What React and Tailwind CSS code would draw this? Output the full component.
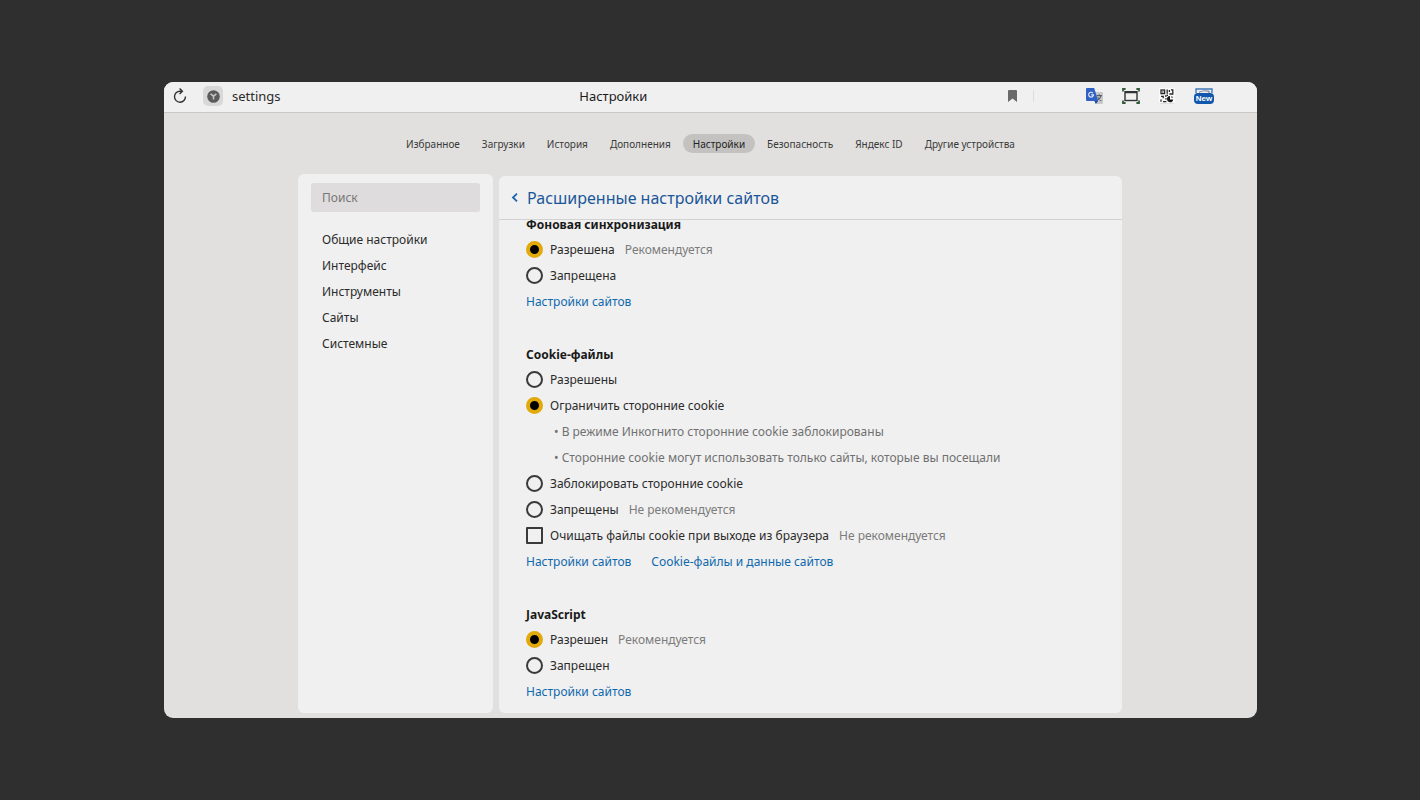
const tabs = [
  'Избранное',
  'Загрузки',
  'История',
  'Дополнения',
  'Настройки',
  'Безопасность',
  'Яндекс ID',
  'Другие устройства',
];

const menu = ['Общие настройки', 'Интерфейс', 'Инструменты', 'Сайты', 'Системные'];

function ReloadIcon() {
  return (
    <svg className="size-4" viewBox="0 0 16 16" fill="none" stroke="#303030" strokeWidth="1.4">
      <path d="M9.8 3.2H8A5.5 5.5 0 1 0 13.5 8.6" />
      <path d="M7.6 0.6L10.4 3.3L7.6 6" />
    </svg>
  );
}

function SiteIcon() {
  return (
    <span className="flex size-5 items-center justify-center rounded-[5px] bg-[#d9d8d8]">
      <svg className="size-[13px]" viewBox="0 0 13 13">
        <circle cx="6.5" cy="6.5" r="6.3" fill="#5c5b5b" />
        <path d="M3.6 3.8L6.5 6.2L9.4 3.8M6.5 6V9.6" fill="none" stroke="#c4c3c3" strokeWidth="1.6" />
      </svg>
    </span>
  );
}

function BookmarkIcon() {
  return (
    <svg className="h-3 w-[9px]" viewBox="0 0 9 12">
      <path d="M1 0H8Q9 0 9 1V12L4.5 8.6L0 12V1Q0 0 1 0Z" fill="#6a6a6a" />
    </svg>
  );
}

function TranslateIcon() {
  return (
    <svg className="h-4 w-[17px]" viewBox="0 0 17 16">
      <path d="M7 4H16Q17 4 17 5V15Q17 16 16 16H10Z" fill="#c9c9c9" />
      <path d="M10.5 7.6H16M13.2 6.2V7.6M15 7.8Q14.2 11 11 12.6M11.6 9.2Q13 11.8 15.4 12.8" fill="none" stroke="#56606e" strokeWidth="1.1" />
      <path d="M1 0H8.2L12.2 13H1Q0 13 0 12V1Q0 0 1 0Z" fill="#2f62c4" />
      <path d="M8.4 13H12.2L9.8 16Z" fill="#1f489f" />
      <path d="M6.9 5.1A2.4 2.4 0 1 0 7.5 6.9H5.2" fill="none" stroke="#e8eefb" strokeWidth="1.1" />
    </svg>
  );
}

function ScreenshotIcon() {
  return (
    <svg className="h-4 w-[18px]" viewBox="0 0 18 16" fill="none">
      <path d="M1 3.6V1H3.6M14.4 1H17V3.6M17 12.4V15H14.4M3.6 15H1V12.4" stroke="#2f5c35" strokeWidth="1.8" />
      <rect x="3" y="3.7" width="12" height="8.8" stroke="#303236" strokeWidth="1.4" />
      <path d="M3 4.2H15" stroke="#303236" strokeWidth="2.2" />
    </svg>
  );
}

function QrIcon() {
  return (
    <svg className="size-4" viewBox="0 0 16 16">
      <rect width="16" height="16" rx="1" fill="#fafafa" />
      <path d="M0.5 15.7H15.5" stroke="#c4c4c4" strokeWidth="0.6" />
      <g fill="none" stroke="#282828" strokeWidth="1.3">
        <rect x="2" y="2" width="3.6" height="3.6" />
        <path d="M8.2 1.4V5.8M10.4 2V4M10.4 6H13.8V1.8H12M2 8.4H4.2V10.2M6 8H7.6M2 13.8V11.6M4 13.6H7.4M6.2 10.8H7.8" />
      </g>
      <path d="M3.3 3.3H4.4V4.4H3.3ZM7.6 6.6H9V8H7.6Z" fill="#282828" />
      <path d="M11 8A3.1 3.1 0 1 0 14.2 11.4H11Z" fill="#181818" />
      <path d="M12.2 7.8A2.7 2.7 0 0 1 14.4 10H12.2Z" fill="#888" />
    </svg>
  );
}

function NewIcon() {
  return (
    <span className="flex w-5 flex-col">
      <svg className="h-[5px] w-full" viewBox="0 0 20 5" fill="none">
        <path d="M2 5V1H18V5" stroke="#3f78b8" strokeWidth="1.4" />
        <path d="M5 4.2Q10 1.8 15 3.4V5" stroke="#76849a" strokeWidth="1.2" />
      </svg>
      <span className="flex h-[11px] items-center justify-center rounded-sm bg-[#1157ab] font-['Liberation_Sans',sans-serif] text-[8px] leading-none font-bold text-white">
        New
      </span>
    </span>
  );
}

function Option({ type = 'radio', name, label, note, checked }) {
  const shape =
    type === 'radio'
      ? 'rounded-full border-2 checked:border-4 checked:border-[#e2a90b] checked:bg-black'
      : 'rounded-[1px] border-2 checked:bg-[#e2a90b]';
  return (
    <div className="flex h-[26px] items-center">
      <label className="flex items-center gap-[7px]">
        <input
          type={type}
          name={name}
          defaultChecked={checked}
          className={`mb-[2px] size-[17px] shrink-0 appearance-none border-[#3a3a3a] ${shape}`}
        />
        {label}
      </label>
      {note && <span className="ml-[10px] text-[#7b7b7b]">{note}</span>}
    </div>
  );
}

function Section({ title, links, children }) {
  return (
    <section>
      <h2 className="h-6 leading-6 font-bold text-[#1a1a1a]">{title}</h2>
      {children}
      <div className="flex h-[26px] items-center gap-5">
        {links.map((link) => (
          <a key={link} href="#" className="text-[#0f69ad]">
            {link}
          </a>
        ))}
      </div>
    </section>
  );
}

export default function App() {
  return (
    <div className="flex min-h-screen bg-[#2f2f2f] py-[82px] pr-[163px] pl-[164px] font-['Noto_Sans',sans-serif] text-[12px] leading-4 text-[#2b2b2b]">
      <div className="flex min-w-0 flex-1 flex-col overflow-hidden rounded-[9px] bg-[#e1e0de]">
        <header className="flex h-[31px] items-center border-b border-[#c9c8c6] bg-[#f0f0f0] pb-[2px]">
          <div className="flex w-[38%] items-center pl-2">
            <button type="button" aria-label="Обновить">
              <ReloadIcon />
            </button>
            <span className="ml-[15px]">
              <SiteIcon />
            </span>
            <span className="ml-[9px] text-[13px]">settings</span>
          </div>
          <h1 className="text-[13px] text-[#1c1c1c]">Настройки</h1>
          <div className="ml-auto flex items-center pr-[43px]">
            <button type="button" aria-label="Закладка">
              <BookmarkIcon />
            </button>
            <span className="ml-4 h-3 w-px bg-[#dcdcdc]" />
            <div className="ml-[52px] flex items-center gap-[19px]">
              <button type="button" aria-label="Переводчик">
                <TranslateIcon />
              </button>
              <button type="button" aria-label="Снимок экрана">
                <ScreenshotIcon />
              </button>
              <button type="button" aria-label="QR-код">
                <QrIcon />
              </button>
              <button type="button" aria-label="Новое">
                <NewIcon />
              </button>
            </div>
          </div>
        </header>

        <nav className="mt-[21px] flex justify-center gap-[2px] text-[10px]">
          {tabs.map((tab) => (
            <a
              key={tab}
              href="#"
              className={`flex h-[19px] items-center rounded-full px-[10px] ${
                tab === 'Настройки' ? 'bg-[#c3c2c0] text-[#222222]' : 'text-[#3a3a3a]'
              }`}
            >
              {tab}
            </a>
          ))}
        </nav>

        <div className="mt-[21px] flex flex-1 justify-center gap-[6px] pr-[17px] pb-[5px] pl-4">
          <aside className="w-[195px] shrink-0 rounded-md bg-[#f0f0f0] px-[13px] pt-[9px]">
            <input
              type="search"
              aria-label="Поиск"
              placeholder="Поиск"
              className="h-[29px] w-full rounded-[3px] bg-[#dedcdd] px-[11px] placeholder:text-[#777777]"
            />
            <ul className="mt-[15px] px-[11px]">
              {menu.map((item) => (
                <li key={item} className="flex h-[26px] items-center">
                  <a href="#">{item}</a>
                </li>
              ))}
            </ul>
          </aside>

          <main className="mt-[2px] w-[623px] overflow-hidden rounded-md bg-[#f0f0f0]">
            <div className="relative flex h-11 items-center gap-2 border-b border-[#d2d2d2] pl-3">
              <button type="button" aria-label="Назад" className="text-[#1c65a8]">
                <svg className="h-[9px] w-2" viewBox="0 0 8 9" fill="none" stroke="currentColor" strokeWidth="1.8">
                  <path d="M6 0.7L2 4.5L6 8.3" />
                </svg>
              </button>
              <h2 className="text-[16px] leading-6 text-[#1b5699]">Расширенные настройки сайтов</h2>
            </div>
            <div className="-mt-[7px] flex flex-col gap-7 px-[27px]">
              <Section title="Фоновая синхронизация" links={['Настройки сайтов']}>
                <Option name="sync" label="Разрешена" note="Рекомендуется" checked />
                <Option name="sync" label="Запрещена" />
              </Section>
              <Section title="Cookie-файлы" links={['Настройки сайтов', 'Cookie-файлы и данные сайтов']}>
                <Option name="cookie" label="Разрешены" />
                <Option name="cookie" label="Ограничить сторонние cookie" checked />
                <ul className="pl-7 leading-[26px] text-[#707070]">
                  <li>• В режиме Инкогнито сторонние cookie заблокированы</li>
                  <li>• Сторонние cookie могут использовать только сайты, которые вы посещали</li>
                </ul>
                <Option name="cookie" label="Заблокировать сторонние cookie" />
                <Option name="cookie" label="Запрещены" note="Не рекомендуется" />
                <Option
                  type="checkbox"
                  name="clear"
                  label="Очищать файлы cookie при выходе из браузера"
                  note="Не рекомендуется"
                />
              </Section>
              <Section title="JavaScript" links={['Настройки сайтов']}>
                <Option name="js" label="Разрешен" note="Рекомендуется" checked />
                <Option name="js" label="Запрещен" />
              </Section>
            </div>
          </main>
        </div>
      </div>
    </div>
  );
}
